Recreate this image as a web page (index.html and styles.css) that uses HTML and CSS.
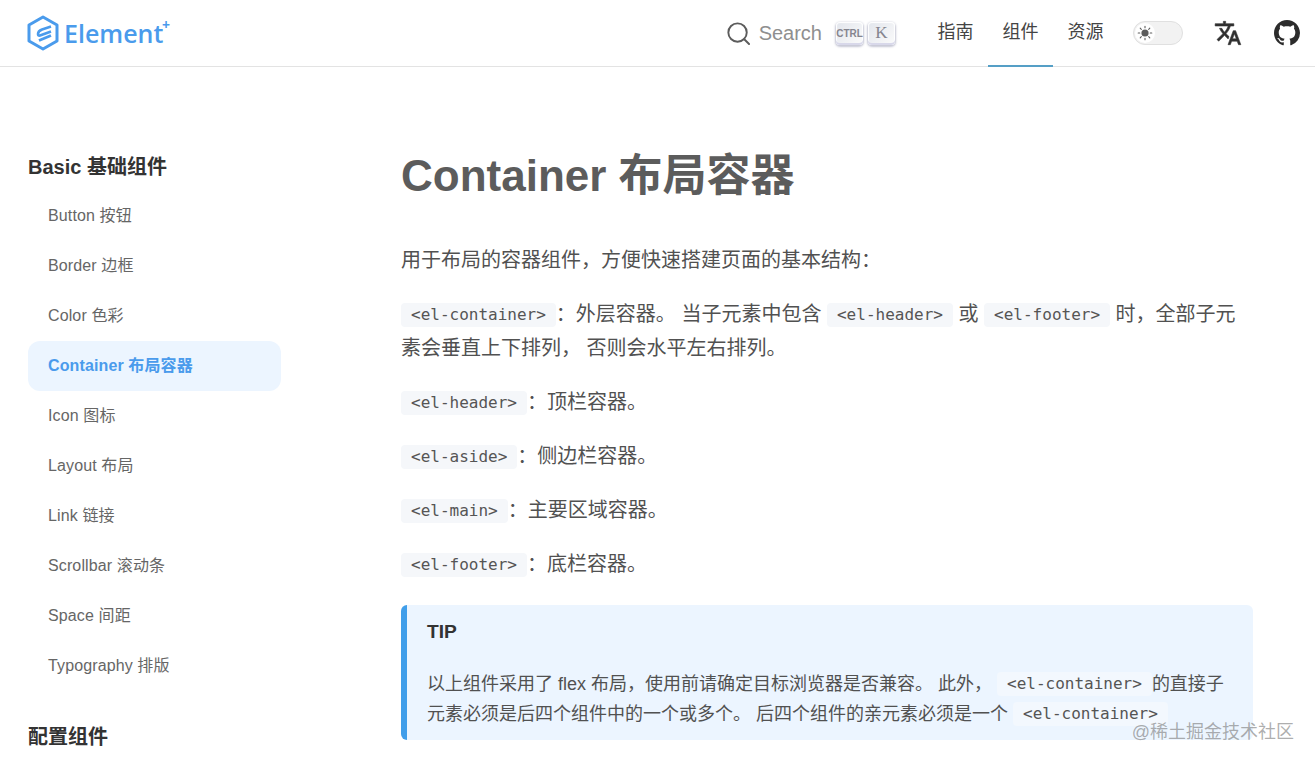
FILE: index.html
```html
<!DOCTYPE html>
<html lang="zh-CN">
<head>
<meta charset="utf-8">
<title>Container 布局容器</title>
<link rel="stylesheet" href="styles.css">
</head>
<body>
<header class="topbar">
  <a class="logo">
    <svg class="logo-mark" viewBox="0 0 32 36" width="32" height="36">
      <path d="M16 2 L30 10 V26 L16 34 L2 26 V10 Z" fill="none" stroke="#4a9bec" stroke-width="3" stroke-linejoin="round"/>
      <path d="M24 11.5 L15 14.5 Q11 16 11 19 Q11 21 13 20.5 L24 16.5" fill="none" stroke="#4a9bec" stroke-width="2.6" stroke-linejoin="round"/>
      <path d="M24 20.5 L12 25.5" fill="none" stroke="#4a9bec" stroke-width="2.8"/>
    </svg>
    <span class="logo-text">Element<sup class="logo-plus">+</sup></span>
  </a>
  <div class="topbar-right">
    <div class="search">
      <svg class="search-icon" viewBox="0 0 24 24" width="23" height="23">
        <circle cx="11" cy="11" r="9.6" fill="none" stroke="#5c5c5c" stroke-width="2"/>
        <path d="M18 18 L23 23" stroke="#5c5c5c" stroke-width="2" stroke-linecap="round"/>
      </svg>
      <span class="search-label">Search</span>
      <span class="keys">
        <kbd class="key key-ctrl">CTRL</kbd>
        <kbd class="key key-k">K</kbd>
      </span>
    </div>
    <nav class="nav">
      <a class="nav-item">指南</a>
      <a class="nav-item nav-item-active">组件</a>
      <a class="nav-item">资源</a>
    </nav>
    <div class="theme-switch">
      <span class="theme-knob">
        <svg viewBox="0 0 16 16" width="16" height="16">
          <circle cx="8" cy="8" r="3.6" fill="#5c5c5c"/>
          <path d="M8 1.2v1.6M8 13.2v1.6M1.2 8h1.6M13.2 8h1.6M3.2 3.2l1.1 1.1M11.7 11.7l1.1 1.1M3.2 12.8l1.1-1.1M11.7 4.3l1.1-1.1" stroke="#5c5c5c" stroke-width="1.1" stroke-linecap="round"/>
        </svg>
      </span>
    </div>
    <svg class="translate" viewBox="0 0 24 24" width="28" height="28">
      <path fill="#303030" stroke="#303030" stroke-width="0.5" d="M12.87 15.07l-2.54-2.51.03-.03c1.74-1.94 2.98-4.17 3.71-6.53H17V4h-7V2H8v2H1v1.99h11.17C11.5 7.92 10.44 9.75 9 11.35 8.07 10.32 7.3 9.19 6.69 8h-2c.73 1.63 1.73 3.17 2.98 4.56l-5.09 5.02L4 19l5-5 3.11 3.11.76-2.04zM18.5 10h-2L12 22h2l1.12-3h4.75L21 22h2l-4.5-12zm-2.62 7l1.62-4.33L19.12 17h-3.24z"/>
    </svg>
    <svg class="github" viewBox="0 0 16 16" width="26" height="26">
      <path fill="#2c2c2c" d="M8 0C3.58 0 0 3.58 0 8c0 3.54 2.29 6.53 5.47 7.59.4.07.55-.17.55-.38 0-.19-.01-.82-.01-1.49-2.01.37-2.53-.49-2.69-.94-.09-.23-.48-.94-.82-1.13-.28-.15-.68-.52-.01-.53.63-.01 1.08.58 1.23.82.72 1.21 1.87.87 2.33.66.07-.52.28-.87.51-1.07-1.78-.2-3.64-.89-3.64-3.95 0-.87.31-1.59.82-2.15-.08-.2-.36-1.02.08-2.12 0 0 .67-.21 2.2.82.64-.18 1.32-.27 2-.27.68 0 1.36.09 2 .27 1.53-1.04 2.2-.82 2.2-.82.44 1.1.16 1.92.08 2.12.51.56.82 1.27.82 2.15 0 3.07-1.87 3.75-3.65 3.95.29.25.54.73.54 1.48 0 1.07-.01 1.93-.01 2.2 0 .21.15.46.55.38A8.013 8.013 0 0016 8c0-4.42-3.58-8-8-8z"/>
    </svg>
  </div>
</header>
<div class="page">
  <aside class="sidebar">
    <h2 class="side-title">Basic 基础组件</h2>
    <a class="side-link">Button 按钮</a>
    <a class="side-link">Border 边框</a>
    <a class="side-link">Color 色彩</a>
    <a class="side-link side-link-active">Container 布局容器</a>
    <a class="side-link">Icon 图标</a>
    <a class="side-link">Layout 布局</a>
    <a class="side-link">Link 链接</a>
    <a class="side-link">Scrollbar 滚动条</a>
    <a class="side-link">Space 间距</a>
    <a class="side-link">Typography 排版</a>
    <h2 class="side-title side-title-next">配置组件</h2>
  </aside>
  <main class="content">
    <h1 class="page-title">Container 布局容器</h1>
    <p class="para">用于布局的容器组件，方便快速搭建页面的基本结构：</p>
    <p class="para"><code class="code">&lt;el-container&gt;</code>：外层容器。 当子元素中包含 <code class="code">&lt;el-header&gt;</code> 或 <code class="code">&lt;el-footer&gt;</code> 时，全部子元素会垂直上下排列， 否则会水平左右排列。</p>
    <p class="para"><code class="code">&lt;el-header&gt;</code>：顶栏容器。</p>
    <p class="para"><code class="code">&lt;el-aside&gt;</code>：侧边栏容器。</p>
    <p class="para"><code class="code">&lt;el-main&gt;</code>：主要区域容器。</p>
    <p class="para"><code class="code">&lt;el-footer&gt;</code>：底栏容器。</p>
    <section class="tip">
      <p class="tip-title">TIP</p>
      <p class="tip-body">以上组件采用了 flex 布局，使用前请确定目标浏览器是否兼容。 此外， <code class="code code-tip">&lt;el-container&gt;</code>的直接子元素必须是后四个组件中的一个或多个。 后四个组件的亲元素必须是一个 <code class="code code-tip">&lt;el-container&gt;</code></p>
    </section>
  </main>
</div>
<div class="watermark">@稀土掘金技术社区</div>
</body>
</html>
```
FILE: styles.css
```css
* { box-sizing: border-box; }
html, body { margin: 0; height: 100%; overflow: hidden; }
body {
  background: #fff;
  color: #515151;
  font-family: "Liberation Sans", "Noto Sans CJK SC", sans-serif;
}
.topbar {
  height: 67px;
  border-bottom: 1px solid #e3e3e3;
  padding: 0 15px 0 27px;
  display: flex;
  align-items: center;
  justify-content: space-between;
}
.logo { display: flex; align-items: center; gap: 5px; }
.logo-mark { display: block; }
.logo-text {
  font-family: "Open Sans", sans-serif;
  font-size: 25px;
  font-weight: 600;
  color: #4a9bec;
  position: relative;
}
.logo-plus {
  position: absolute;
  top: 2px;
  left: 98px;
  font-size: 14px;
  line-height: 1;
  font-weight: 700;
}
.topbar-right { display: flex; align-items: center; height: 66px; }
.search { display: flex; align-items: center; }
.search-icon { margin-right: 9px; }
.search-label { font-size: 20px; color: #8f8f8f; }
.keys { display: flex; gap: 5px; margin-left: 14px; }
.key {
  width: 27px;
  height: 23px;
  display: flex;
  align-items: center;
  justify-content: center;
  border-radius: 4px;
  background: linear-gradient(-225deg, #e2e5ec, #fbfbfb);
  box-shadow: inset 0 -2px 0 0 #d8d8ea, inset 0 0 1px 1px #fff, 0 1px 2px 1px rgba(30, 35, 90, 0.25);
  color: #85858f;
}
.key-ctrl { font-family: "Liberation Sans Narrow", "Liberation Sans", sans-serif; font-size: 10px; font-weight: 700; }
.key-k { font-family: "Liberation Serif", serif; font-size: 17px; }
.nav { display: flex; align-self: stretch; margin-left: 28px; }
.nav-item {
  width: 65px;
  display: flex;
  align-items: center;
  justify-content: center;
  font-size: 18px;
  color: #444;
  padding-bottom: 6px;
  border-bottom: 2px solid transparent;
  height: 67px;
}
.nav-item-active { border-bottom-color: #559fc6; }
.theme-switch {
  width: 50px;
  height: 24px;
  margin-left: 15px;
  border: 1px solid #e0e0e0;
  border-radius: 12px;
  background: #f2f2f2;
  display: flex;
  align-items: center;
  padding-left: 1px;
}
.theme-knob {
  width: 20px;
  height: 20px;
  border-radius: 50%;
  background: #fff;
  display: flex;
  align-items: center;
  justify-content: center;
}
.translate { margin-left: 31px; }
.github { margin-left: 32px; }

.page { display: flex; }
.sidebar {
  width: 253px;
  margin-left: 28px;
  flex: none;
  padding-top: 86px;
}
.side-title {
  margin: 0;
  height: 38px;
  line-height: 28px;
  font-size: 20px;
  font-weight: 700;
  color: #333;
}
.side-title-next { margin-top: 32px; }
.side-link {
  display: block;
  height: 50px;
  line-height: 50px;
  padding-left: 20px;
  font-size: 16px;
  letter-spacing: 0.12px;
  color: #666;
  border-radius: 12px;
}
.side-link-active {
  background: #ecf5ff;
  color: #4a9bec;
  font-weight: 700;
}
.content { width: 852px; margin-left: 120px; }
.page-title {
  margin: 0 0 37px;
  padding-top: 79px;
  font-size: 44px;
  line-height: 60px;
  font-weight: 700;
  color: #5c5c5c;
}
.para {
  margin: 0 0 20px;
  font-size: 20px;
  line-height: 34px;
}
.code {
  font-family: "DejaVu Sans Mono", monospace;
  font-size: 16px;
  line-height: 1;
  padding: 2px 10px 3px;
  vertical-align: 1px;
  border-radius: 4px;
  background: #f5f7fa;
  color: #555;
}
.tip {
  margin-top: 24px;
  height: 135px;
  overflow: hidden;
  background: #ecf5ff;
  border-left: 6px solid #409eea;
  border-radius: 6px;
  padding: 15px 20px 0 20px;
}
.tip-title { margin: 0 0 25px; font-size: 19.2px; line-height: 24px; font-weight: 700; color: #333; }
.tip-body { margin: 0; font-size: 18px; line-height: 30px; }
.code-tip { background: #f3f8fe; }
.watermark {
  position: absolute;
  right: 21px;
  top: 720px;
  font-size: 18px;
  line-height: 24px;
  color: rgba(120, 120, 120, 0.6);
}
```
